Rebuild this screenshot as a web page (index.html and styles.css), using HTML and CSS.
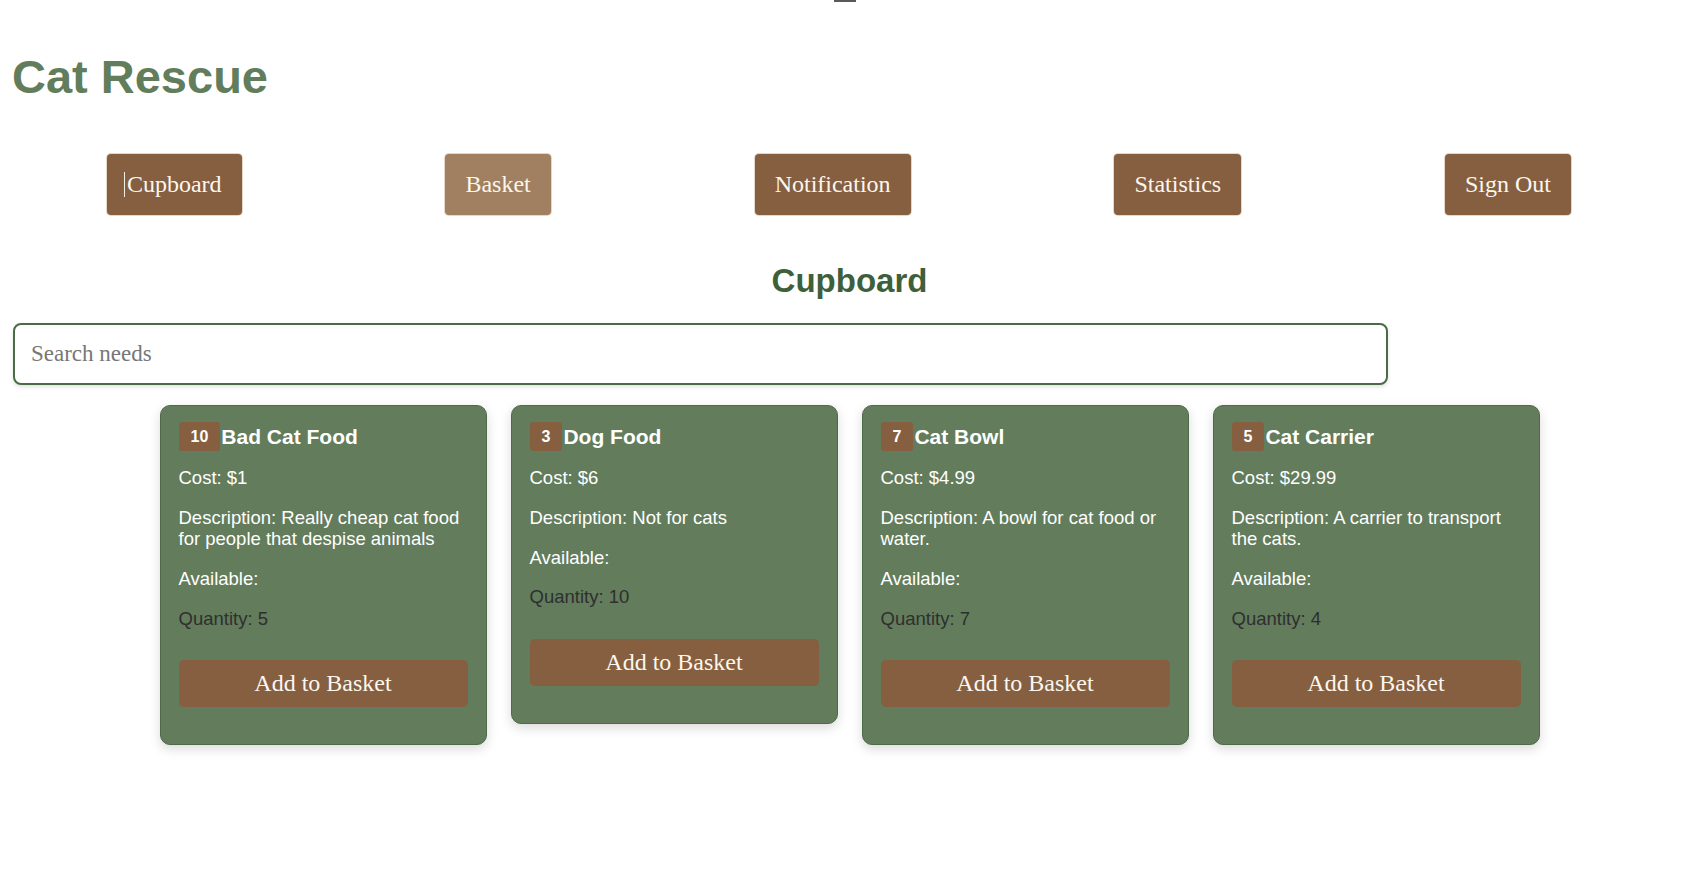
FILE: index.html
```html
<!DOCTYPE html>
<html lang="en">
<head>
<meta charset="utf-8">
<title>Cat Rescue</title>
<link rel="stylesheet" href="styles.css">
</head>
<body>
<div class="top-mark"></div>
<header class="header">
  <h1 class="brand">Cat Rescue</h1>
</header>
<nav class="nav">
  <button class="nav-btn"><span class="caret"></span>Cupboard</button>
  <button class="nav-btn nav-btn-light">Basket</button>
  <button class="nav-btn">Notification</button>
  <button class="nav-btn">Statistics</button>
  <button class="nav-btn">Sign Out</button>
</nav>
<main class="main">
  <h2 class="section-title">Cupboard</h2>
  <input class="search" type="text" placeholder="Search needs">
  <div class="cards">
    <div class="card">
      <div class="card-title"><span class="badge">10</span><span class="name">Bad Cat Food</span></div>
      <p>Cost: $1</p>
      <p>Description: Really cheap cat food for people that despise animals</p>
      <p>Available:</p>
      <p class="qty">Quantity: 5</p>
      <button class="add-btn">Add to Basket</button>
    </div>
    <div class="card">
      <div class="card-title"><span class="badge">3</span><span class="name">Dog Food</span></div>
      <p>Cost: $6</p>
      <p>Description: Not for cats</p>
      <p>Available:</p>
      <p class="qty">Quantity: 10</p>
      <button class="add-btn">Add to Basket</button>
    </div>
    <div class="card">
      <div class="card-title"><span class="badge">7</span><span class="name">Cat Bowl</span></div>
      <p>Cost: $4.99</p>
      <p>Description: A bowl for cat food or water.</p>
      <p>Available:</p>
      <p class="qty">Quantity: 7</p>
      <button class="add-btn">Add to Basket</button>
    </div>
    <div class="card">
      <div class="card-title"><span class="badge">5</span><span class="name">Cat Carrier</span></div>
      <p>Cost: $29.99</p>
      <p>Description: A carrier to transport the cats.</p>
      <p>Available:</p>
      <p class="qty">Quantity: 4</p>
      <button class="add-btn">Add to Basket</button>
    </div>
  </div>
</main>
</body>
</html>
```
FILE: styles.css
```css
* { box-sizing: border-box; }

body {
  margin: 0;
  background: #ffffff;
  font-family: "Liberation Sans", Arial, sans-serif;
  color: #ffffff;
}

.top-mark {
  position: absolute;
  top: 0;
  left: 834px;
  width: 22px;
  height: 2px;
  background: #5a5a5a;
}

.header {
  padding: 50px 0 0 12px;
}

.brand {
  margin: 0;
  font-size: 47px;
  line-height: 53px;
  font-weight: bold;
  color: #627d5c;
}

.nav {
  display: flex;
  justify-content: space-around;
  align-items: center;
  margin: 51px 13px 0 5px;
}

.nav-btn {
  font-family: "Liberation Serif", "Times New Roman", serif;
  font-size: 24px;
  line-height: 27px;
  padding: 17px 20px;
  color: #fbf6ef;
  background: #855f3f;
  border: none;
  border-radius: 4px;
  box-shadow: 0 0 0 1px rgba(200, 175, 150, 0.5);
}

.nav-btn-light {
  background: #a08060;
}

.caret {
  display: inline-block;
  width: 1px;
  height: 25px;
  margin: 0 2px 0 -3px;
  vertical-align: -5px;
  background: #f4ede4;
}

.main {
  padding: 0 0 40px 13px;
}

.section-title {
  margin: 47px 0 0;
  text-align: center;
  font-size: 33px;
  line-height: 38px;
  font-weight: bold;
  color: #3f5f3b;
}

.search {
  display: block;
  width: 1375px;
  height: 62px;
  margin-top: 23px;
  padding: 0 16px;
  border: 2px solid #4a6b45;
  border-radius: 8px;
  font-family: "Liberation Serif", "Times New Roman", serif;
  font-size: 23px;
  color: #333;
  background: #fff;
  box-shadow: 0 2px 4px rgba(0, 0, 0, 0.12);
  outline: none;
}

.search::placeholder {
  color: #777777;
}

.cards {
  display: flex;
  justify-content: center;
  align-items: flex-start;
  gap: 24px;
  margin-top: 20px;
}

.card {
  width: 327px;
  padding: 16px 18px 37px;
  background: #627c5c;
  border: 1px solid #4f6a4a;
  border-radius: 10px;
  box-shadow: 0 4px 12px rgba(0, 0, 0, 0.15);
  font-size: 18.5px;
}

.card-title {
  display: flex;
  align-items: center;
  margin-bottom: 16px;
}

.badge {
  display: inline-block;
  height: 29px;
  line-height: 29px;
  padding: 0 12px;
  background: #855f3f;
  border-radius: 3px;
  font-size: 16px;
  font-weight: bold;
  color: #fff;
}

.name {
  font-size: 21px;
  font-weight: bold;
  margin-left: 1px;
}

.card p {
  margin: 0 0 18.5px;
  line-height: 21.3px;
}

.card .qty {
  color: #2f2f2f;
}

.add-btn {
  display: block;
  width: 100%;
  height: 47px;
  margin-top: 31px;
  font-family: "Liberation Serif", "Times New Roman", serif;
  font-size: 24px;
  color: #fbf6ef;
  background: #855f3f;
  border: none;
  border-radius: 5px;
}
```
